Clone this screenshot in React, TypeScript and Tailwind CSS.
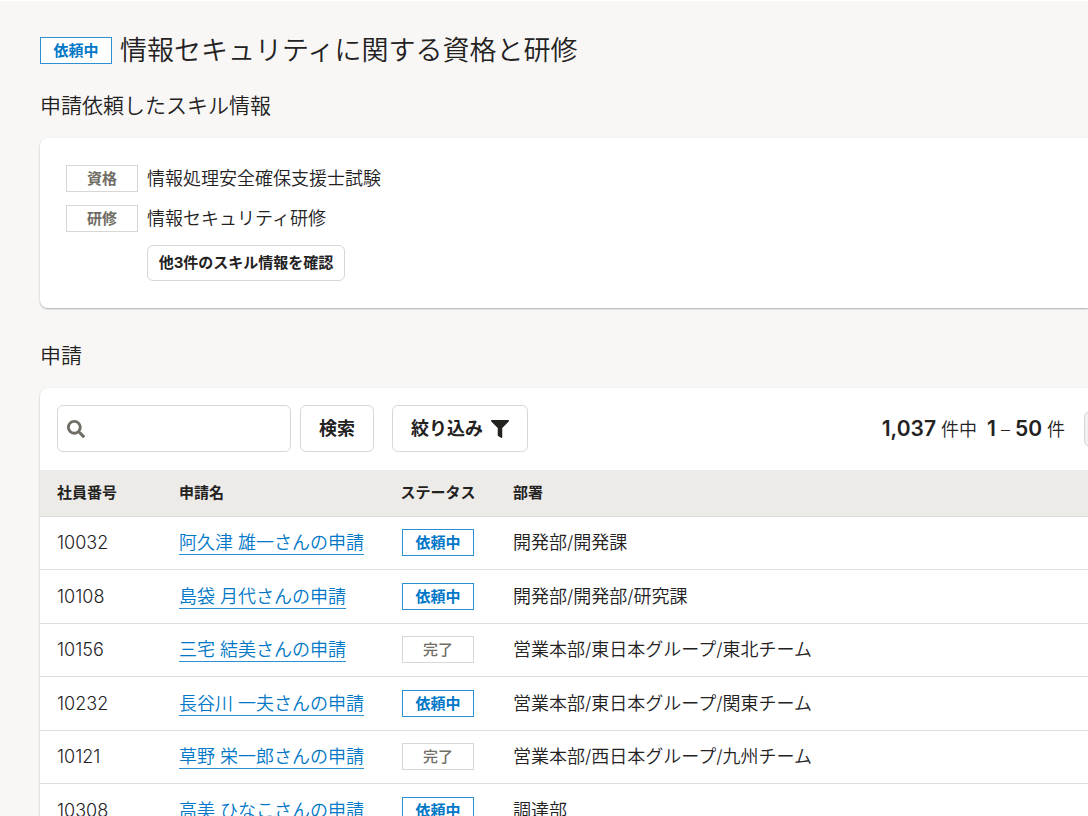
import React from 'react';
import { FaFilter, FaSearch } from 'react-icons/fa';

type Tone = 'active' | 'strong' | 'muted';

interface Skill {
  kind: string;
  name: string;
}

interface Application {
  id: string;
  name: string;
  status: '依頼中' | '完了';
  department: string;
}

const skills: Skill[] = [
  { kind: '資格', name: '情報処理安全確保支援士試験' },
  { kind: '研修', name: '情報セキュリティ研修' },
];

const applications: Application[] = [
  { id: '10032', name: '阿久津 雄一さんの申請', status: '依頼中', department: '開発部/開発課' },
  { id: '10108', name: '島袋 月代さんの申請', status: '依頼中', department: '開発部/開発部/研究課' },
  { id: '10156', name: '三宅 結美さんの申請', status: '完了', department: '営業本部/東日本グループ/東北チーム' },
  { id: '10232', name: '長谷川 一夫さんの申請', status: '依頼中', department: '営業本部/東日本グループ/関東チーム' },
  { id: '10121', name: '草野 栄一郎さんの申請', status: '完了', department: '営業本部/西日本グループ/九州チーム' },
  { id: '10308', name: '高美 ひなこさんの申請', status: '依頼中', department: '調達部' },
];

const tones: Record<Tone, string> = {
  active: 'border-[#2b8fd3] text-[#0077c7] font-bold',
  strong: 'border-[#d9d7d3] text-[#706d65] font-bold',
  muted: 'border-[#d9d7d3] text-[#706d65] font-medium',
};

const StatusLabel: React.FC<{ tone: Tone; children: React.ReactNode }> = ({ tone, children }) => (
  <span
    className={`inline-flex h-[27px] w-[72px] shrink-0 items-center justify-center border bg-white text-[15px] leading-none ${tones[tone]}`}
  >
    {children}
  </span>
);

const SectionHeading: React.FC<{ children: React.ReactNode }> = ({ children }) => (
  <h2 className="mb-4 text-[21px] leading-8 font-[350]">{children}</h2>
);

const cardClass = 'rounded-l-lg bg-white shadow-[0_1px_2px_rgba(3,3,2,0.3)]';
const buttonClass = 'border border-[#d9d7d3] bg-white font-bold text-[#23221f]';

const App: React.FC = () => {
  return (
    <main className="h-screen overflow-hidden border-t border-white bg-[#f8f7f6] pt-[29px] pl-10 font-['Inter','Noto_Sans_CJK_JP',sans-serif] text-[#23221f]">
      <header className="mb-5 flex h-10 items-center gap-2">
        <StatusLabel tone="active">依頼中</StatusLabel>
        <h1 className="pt-px text-[27px] leading-10 font-[350]">情報セキュリティに関する資格と研修</h1>
      </header>

      <section className="mb-8">
        <SectionHeading>申請依頼したスキル情報</SectionHeading>
        <div className={`${cardClass} px-[26px] pt-[27px] pb-[27px]`}>
          <dl className="flex flex-col gap-[13px]">
            {skills.map((skill) => (
              <div key={skill.name} className="flex h-[27px] items-center gap-[9px]">
                <dt className="flex">
                  <StatusLabel tone="strong">{skill.kind}</StatusLabel>
                </dt>
                <dd className="text-[18px] font-[350]">{skill.name}</dd>
              </div>
            ))}
          </dl>
          <button type="button" className={`${buttonClass} mt-[13px] ml-[81px] block h-9 w-[198px] rounded-md text-[15px]`}>
            他3件のスキル情報を確認
          </button>
        </div>
      </section>

      <section>
        <SectionHeading>申請</SectionHeading>
        <div className={`${cardClass} overflow-hidden`}>
          <div className="flex items-center pt-[17px] pb-[18px] pl-[17px]">
            <form className="flex gap-[9px]" onSubmit={(e) => e.preventDefault()}>
              <div className="relative">
                <FaSearch className="absolute top-[15px] left-[10px] size-[18px] text-[#706d65]" />
                <input
                  type="search"
                  aria-label="申請を検索"
                  className="h-[47px] w-[234px] rounded-md border border-[#d9d7d3] bg-white pr-3 pl-10 text-[18px]"
                />
              </div>
              <button type="submit" className={`${buttonClass} h-[47px] w-[74px] rounded-md text-[18px]`}>
                検索
              </button>
            </form>
            <button
              type="button"
              className={`${buttonClass} ml-[18px] flex h-[47px] items-center gap-2 rounded-md px-[18px] text-[18px]`}
            >
              絞り込み
              <FaFilter className="size-[18px]" />
            </button>
            <p className="mr-[19px] ml-auto flex items-baseline gap-[5px] text-[18px] font-[350]">
              <b className="text-[21px] font-semibold">1,037</b>
              <span>件中</span>
              <b className="ml-[5px] text-[21px] font-semibold">1</b>
              <span>–</span>
              <b className="text-[21px] font-semibold">50</b>
              <span>件</span>
            </p>
            <button
              type="button"
              aria-label="前のページ"
              className="-mr-8 size-9 shrink-0 rounded-md border border-[#d9d7d3] bg-[#f2f1f0]"
            />
          </div>

          <table className="w-full table-fixed text-left">
            <colgroup>
              <col className="w-[122px]" />
              <col className="w-[218px]" />
              <col className="w-[116px]" />
              <col />
            </colgroup>
            <thead>
              <tr className="h-[46px] border-b border-[#dddbd8] bg-[#edebe8] text-[15px]">
                <th className="px-[17px] font-bold">社員番号</th>
                <th className="px-[17px] font-bold">申請名</th>
                <th className="text-center font-bold">ステータス</th>
                <th className="px-[17px] font-bold">部署</th>
              </tr>
            </thead>
            <tbody>
              {applications.map((row) => (
                <tr key={row.id} className="border-b border-[#e0dfdc] text-[18px] font-[350] odd:h-[53px] even:h-[54px]">
                  <td className="px-[17px]">{row.id}</td>
                  <td className="px-[17px] whitespace-nowrap">
                    <a href="#" className="border-b border-[#2b8fd3] pb-px text-[#0077c7]">
                      {row.name}
                    </a>
                  </td>
                  <td>
                    <div className="flex justify-center">
                      <StatusLabel tone={row.status === '依頼中' ? 'active' : 'muted'}>{row.status}</StatusLabel>
                    </div>
                  </td>
                  <td className="px-[17px]">{row.department}</td>
                </tr>
              ))}
            </tbody>
          </table>
        </div>
      </section>
    </main>
  );
};

export default App;
